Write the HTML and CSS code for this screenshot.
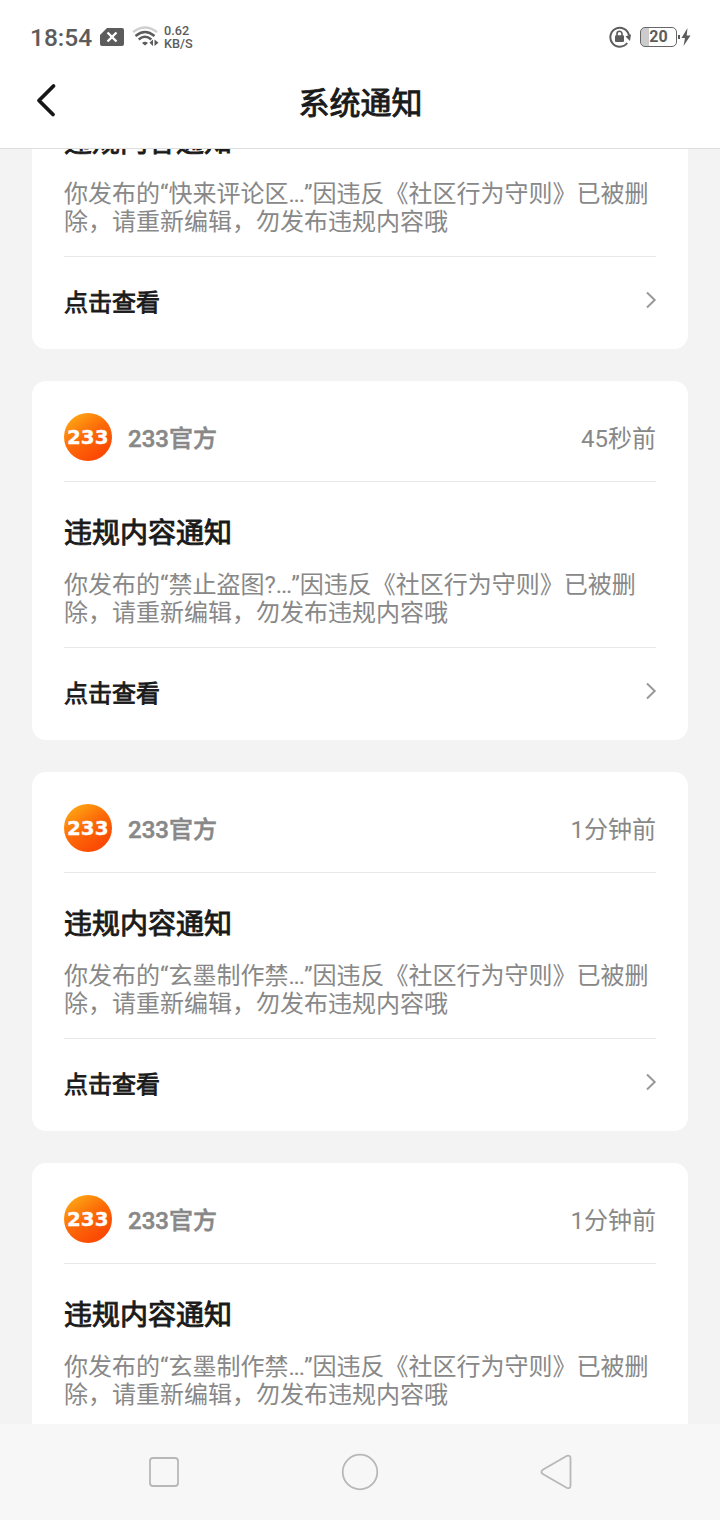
FILE: index.html
```html
<!DOCTYPE html>
<html lang="zh-CN">
<head>
<meta charset="utf-8">
<title>系统通知</title>
<link rel="stylesheet" href="styles.css">
</head>
<body>
<svg width="0" height="0" class="defs">
  <defs>
    <linearGradient id="orange" x1="0.15" y1="0.1" x2="0.7" y2="0.9">
      <stop offset="0" stop-color="#fda313"/>
      <stop offset="0.5" stop-color="#fd6a08"/>
      <stop offset="1" stop-color="#fb4a04"/>
    </linearGradient>
    <symbol id="logo" viewBox="0 0 48 48">
      <circle cx="24" cy="24" r="24" fill="url(#orange)"/>
      <text x="3" y="31" textLength="41.5" lengthAdjust="spacingAndGlyphs" class="logo-text">233</text>
    </symbol>
    <symbol id="chevron" viewBox="0 0 12 18">
      <path d="M2 1.5 9.7 9 2 16.5" fill="none" stroke="#999" stroke-width="2"/>
    </symbol>
  </defs>
</svg>
<div class="screen">
  <div class="status">
    <span class="clock">18:54</span>
    <svg class="sim" width="24" height="18" viewBox="0 0 24 18"><path d="M7 0H22a2 2 0 0 1 2 2V16a2 2 0 0 1-2 2H2a2 2 0 0 1-2-2V7Z" fill="#5c5c5c"/><path d="M7.500 4.500l9 9M16.500 4.500l-9 9" stroke="#fff" stroke-width="2.4"/></svg>
    <svg class="wifi" width="28" height="22" viewBox="0 0 28 22" fill="none"><path d="M1 6Q13-3 25 6" stroke="#cfcfcf" stroke-width="2.2"/><path d="M3.5 10Q13 2 22.5 10M6.7 13.5Q13 8 19.3 13.5" stroke="#5c5c5c" stroke-width="2.5"/><path d="M10 17Q13 14.500 16 17L13 19.500Z" fill="#5c5c5c"/><path d="M17.500 16.800 21 13.500v6.500ZM22.500 13.500l4 3.300-4 3.300Z" fill="#5c5c5c"/></svg>
    <div class="speed"><span>0.62</span><span>KB/S</span></div>
    <svg class="lock" width="22" height="22" viewBox="0 0 22 22"><path d="M18.2 17A9.4 9.4 0 1 1 20 9.5" fill="none" stroke="#5c5c5c" stroke-width="2"/><path d="M16.5 10.5 22 8.3 21 15Z" fill="#5c5c5c"/><rect x="6" y="9.2" width="9" height="6.8" rx="1" fill="#5c5c5c"/><path d="M8 10V7.8a2.5 2.5 0 0 1 5 0V10" fill="none" stroke="#5c5c5c" stroke-width="1.6"/></svg>
    <div class="battery">20</div>
    <svg class="bolt" width="13" height="20" viewBox="0 0 13 20"><path d="M0 8h2v4H0Z M9.5 1 3.5 11H7L5.5 19 12.5 8.5H8.7Z" fill="#5c5c5c"/></svg>
  </div>
  <header class="bar">
    <svg class="back" width="24" height="36" viewBox="0 0 24 36"><path d="M17.5 4 3 18.5 17 32.5" fill="none" stroke="#171717" stroke-width="3.8" stroke-linecap="round" stroke-linejoin="round"/></svg>
    <h1>系统通知</h1>
  </header>
  <main class="viewport">
    <div class="list">
      <article class="card">
        <div class="head"><svg class="avatar"><use href="#logo"/></svg><span class="name">233官方</span><time>35秒前</time></div>
        <h2>违规内容通知</h2>
        <p>你发布的“快来评论区<span class="dots">...</span>”因违反《社区行为守则》已被删<br>除，请重新编辑，勿发布违规内容哦</p>
        <a class="more">点击查看<svg class="arrow"><use href="#chevron"/></svg></a>
      </article>
      <article class="card">
        <div class="head"><svg class="avatar"><use href="#logo"/></svg><span class="name">233官方</span><time>45秒前</time></div>
        <h2>违规内容通知</h2>
        <p>你发布的“禁止盗图?<span class="dots">...</span>”因违反《社区行为守则》已被删<br>除，请重新编辑，勿发布违规内容哦</p>
        <a class="more">点击查看<svg class="arrow"><use href="#chevron"/></svg></a>
      </article>
      <article class="card">
        <div class="head"><svg class="avatar"><use href="#logo"/></svg><span class="name">233官方</span><time>1分钟前</time></div>
        <h2>违规内容通知</h2>
        <p>你发布的“玄墨制作禁<span class="dots">...</span>”因违反《社区行为守则》已被删<br>除，请重新编辑，勿发布违规内容哦</p>
        <a class="more">点击查看<svg class="arrow"><use href="#chevron"/></svg></a>
      </article>
      <article class="card">
        <div class="head"><svg class="avatar"><use href="#logo"/></svg><span class="name">233官方</span><time>1分钟前</time></div>
        <h2>违规内容通知</h2>
        <p>你发布的“玄墨制作禁<span class="dots">...</span>”因违反《社区行为守则》已被删<br>除，请重新编辑，勿发布违规内容哦</p>
      </article>
    </div>
  </main>
  <nav class="keys">
    <svg width="40" height="40" viewBox="0 0 40 40"><rect x="6" y="6" width="28" height="28" rx="3"/></svg>
    <svg width="40" height="40" viewBox="0 0 40 40"><circle cx="20" cy="20" r="17.3"/></svg>
    <svg width="40" height="40" viewBox="0 0 40 40"><path d="M31 3.8 6.8 17.8Q4 20 6.8 22L31 36Q34.500 37 34.500 33.500V6.300Q34.500 3 31 3.800Z"/></svg>
  </nav>
</div>
</body>
</html>
```
FILE: styles.css
```css
* { box-sizing: border-box; }
body { margin: 0; font-family: Roboto, "Noto Sans CJK SC", sans-serif; }
.defs { display: block; }
.screen { width: 720px; height: 1520px; display: flex; flex-direction: column; background: #f3f3f3; overflow: hidden; }
.status { height: 72px; flex: none; display: flex; align-items: center; padding: 2px 29px 0 30px; background: #fff; color: #5c5c5c; }
.clock { font-size: 24.500px; font-weight: 500; width: 70px; line-height: 30px; margin-top: 1px; }
.wifi { margin-left: 8px; }
.speed { display: flex; flex-direction: column; margin-left: 4px; font-size: 12.700px; line-height: 13px; font-weight: 500; }
.lock { margin-left: auto; }
.battery { width: 37px; height: 20px; margin: -1px 0 0 9px; border: 1.500px solid #666; border-radius: 5px; font-size: 16px; line-height: 18px; font-weight: 700; text-align: center; background: linear-gradient(90deg, #ccc 8px, #fff 8px); }
.bolt { margin: 0 0 0 1px; }
.bar { height: 77px; flex: none; display: grid; grid-template-columns: 60px 1fr 60px; align-items: center; padding: 0 0 14px; background: #fff; border-bottom: 1px solid #dedede; }
.back { margin-left: 36px; margin-top: -6px; }
h1 { margin: 2px 0 0 1px; text-align: center; font-size: 31px; line-height: 40px; font-weight: 400; -webkit-text-stroke: 0.9px; color: #1a1a1a; }
.viewport { flex: 1; min-height: 0; overflow: hidden; padding: 0 32px; }
.list { display: flex; flex-direction: column; gap: 32px; margin-top: -159px; }
.card { height: 359px; flex: none; padding: 32px 32px 0; background: #fff; border-radius: 14px; }
.head { height: 69px; display: flex; align-items: center; padding-bottom: 20px; border-bottom: 1px solid #e8e8e8; color: #888; font-size: 24px; line-height: 36px; }
.avatar { width: 48px; height: 48px; margin-right: 16px; }
.logo-text { font: 700 20px "DejaVu Sans", sans-serif; fill: #fff; stroke: #fff; stroke-width: 0.3px; }
.name { font-weight: 500; -webkit-text-stroke: 0.5px; margin-top: 4px; }
time { margin: 4px 0 0 auto; }
h2 { margin: 32px 0 17px; font-size: 28px; line-height: 40px; font-weight: 400; -webkit-text-stroke: 0.9px; color: #1a1a1a; }
p { margin: 0; padding-bottom: 20px; font-size: 24px; line-height: 28px; color: #888; white-space: nowrap; border-bottom: 1px solid #e8e8e8; }
.dots { letter-spacing: -1.200px; }
.more { height: 86px; display: flex; align-items: center; justify-content: space-between; font-size: 24px; font-weight: 400; -webkit-text-stroke: 0.8px; color: #1a1a1a; }
.arrow { width: 12px; height: 18px; margin: -1px -1px 0 0; }
.keys { height: 96px; flex: none; display: flex; justify-content: space-between; align-items: center; padding: 0 144px; background: #f7f7f7; }
.keys svg { fill: none; stroke: #b8b8b8; stroke-width: 1.800; }
```
